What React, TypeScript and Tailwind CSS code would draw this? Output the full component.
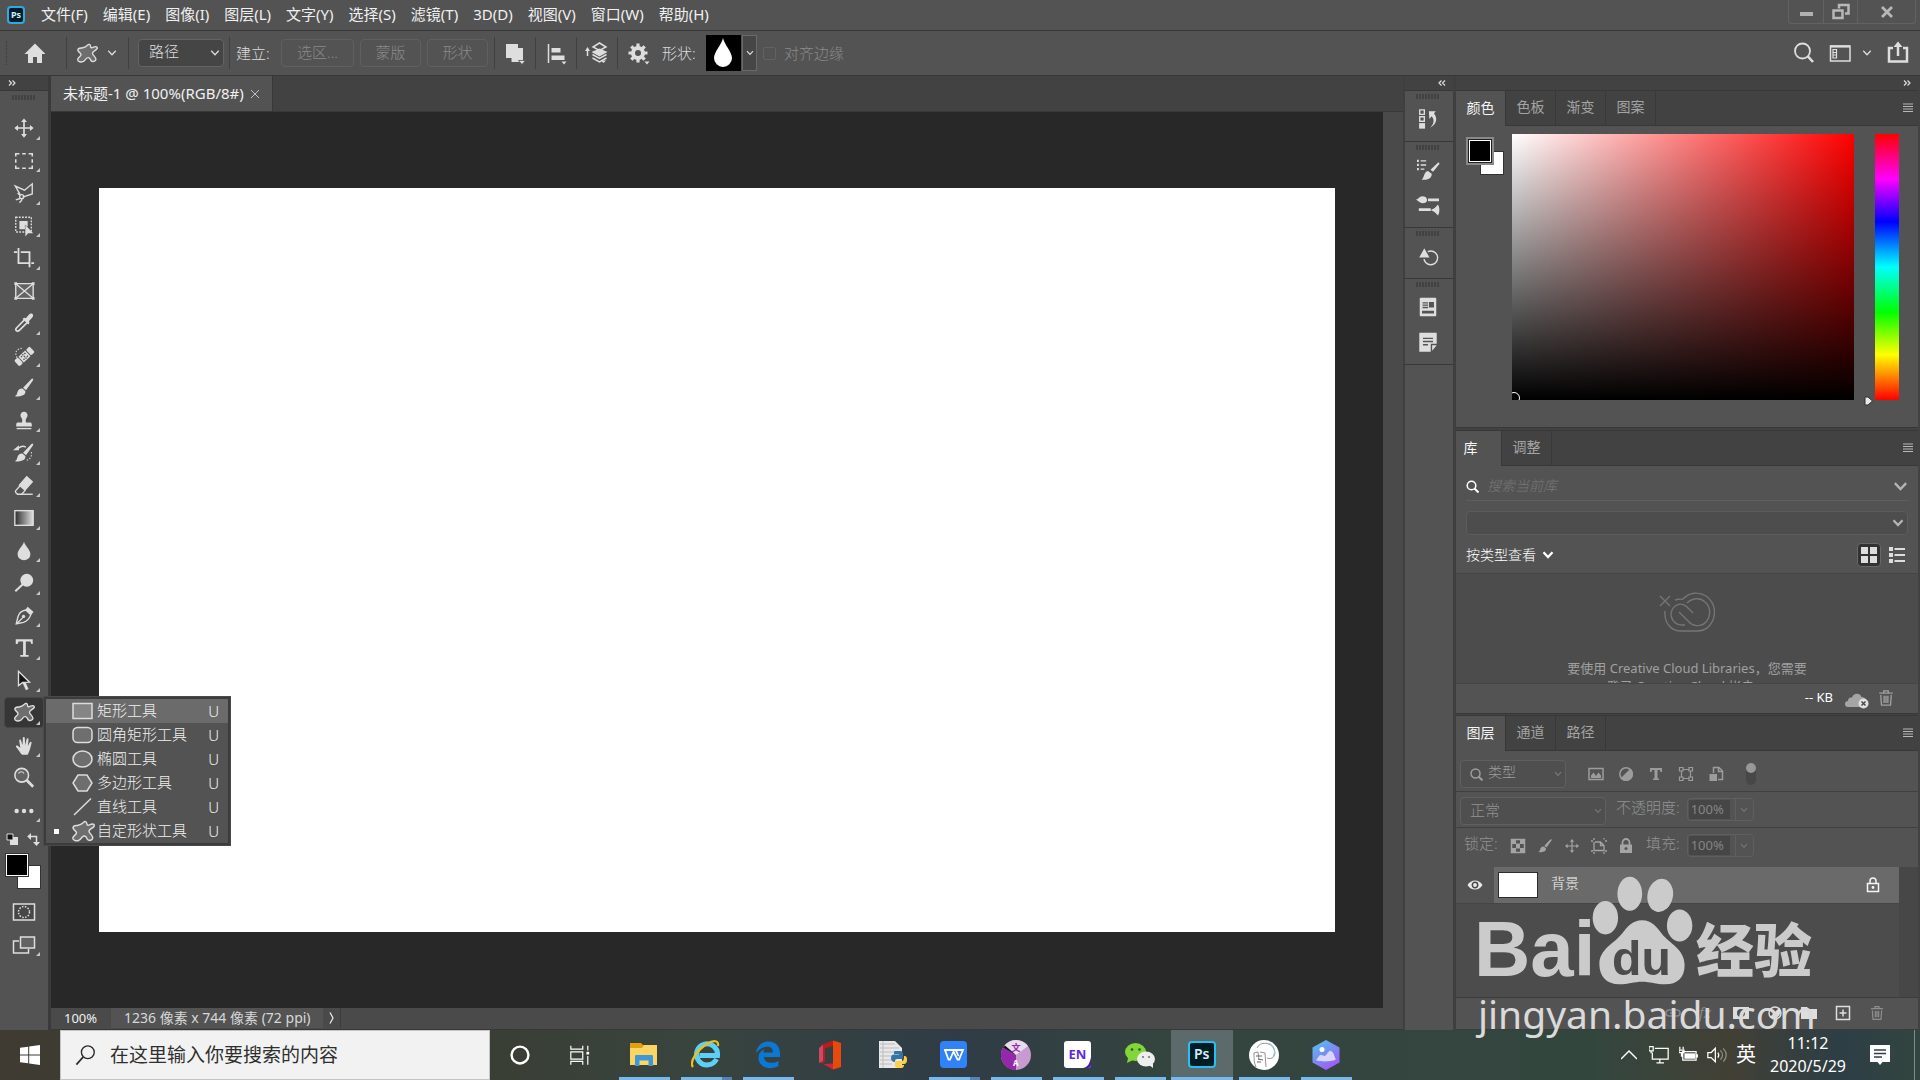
import type { ReactNode } from "react";
import clsx from "clsx";

type IconProps = {
  size?: number;
  box?: string;
  className?: string;
  children: ReactNode;
};

const Icon = ({ size = 24, box = "0 0 24 24", className, children }: IconProps) => (
  <svg
    width={size}
    height={size}
    viewBox={box}
    fill="none"
    stroke="currentColor"
    strokeWidth="1.5"
    className={clsx("shrink-0", className)}
    aria-hidden="true"
  >
    {children}
  </svg>
);

const Chevron = ({ className, size = 8, weight = 1.2 }: { className?: string; size?: number; weight?: number }) => (
  <svg
    width={size}
    height={size}
    viewBox="0 0 8 8"
    fill="none"
    stroke="currentColor"
    strokeWidth={weight}
    className={clsx("shrink-0", className)}
    aria-hidden="true"
  >
    <path d="M1 2.2 4 5.4 7 2.2" />
  </svg>
);

const Corner = () => (
  <svg width="4" height="4" viewBox="0 0 4 4" className="absolute bottom-[5px] right-[8px]" aria-hidden="true">
    <path d="M4 0v4H0z" fill="#c8c8c8" />
  </svg>
);

const DropMark = () => <path d="M16 19.500h5l-2.500 2.500z" fill="currentColor" stroke="none" />;

const Grip = () => (
  <div className="h-[5px] w-6 bg-[repeating-linear-gradient(to_right,#424242_0,#424242_2px,#535353_2px,#535353_3px)]" />
);

const Blob = () => (
  <path
    d="M12.500 3.500C14 1.800 15.600 2.600 15.800 4.500c.2 2.300 1.400 2.100 3.200 1.200C21.800 4.300 24 5.500 23 7.300c-1 1.900-4.500 2.700-5 4.700-.3 2 3.400 4 3.700 6.500.2 2.300-2.700 3.500-4.600 2.400-1.600-1-1.100-3.300-3.600-3.800-2.500-.4-3 2.800-5.500 4.100C5.500 22.400 2 21.600 1.800 19.300c-.1-2.400 3.700-3.300 3.700-5.500C5.500 11.500 1.800 11 2 8.700 2.300 6.200 5 6.700 6.500 6.500c2.500-.4 3.700-.8 6-3z"
    fill="#6e6e6e"
  />
);

const Brush = () => (
  <g fill="currentColor" stroke="none">
    <path d="M21.500 1.800c.9.500.5 1.400 0 2.200l-7.300 10.400-3.200-2.700 8.900-9.300c.5-.5 1.100-.9 1.600-.6z" />
    <path d="M10.200 12.600l3.200 2.800c.8 3.500-3 6.800-11.400 5.500 2.500-1 2.200-2.700 3-4.800.9-2.400 3-3.700 5.200-3.500z" />
  </g>
);

const MoveArrows = () => (
  <g>
    <path d="M12 4v16M4 12h16" strokeWidth="1.800" />
    <path d="M12 1.500l3.200 4H8.800zM12 22.500l3.200-4H8.800zM1.500 12l4-3.200v6.400zM22.500 12l-4-3.200v6.400z" fill="currentColor" stroke="none" />
  </g>
);

const Trash = () => (
  <g>
    <path d="M3 5.500h18M9 5V2.500h6V5M5 8l1 13.500h12L19 8M9.500 9v9.500M12 9v9.500M14.500 9v9.500" strokeWidth="1.800" />
  </g>
);

const tools: { name: string; corner?: boolean; icon: ReactNode }[] = [
  { name: "移动工具", corner: true, icon: <MoveArrows /> },
  { name: "矩形选框工具", corner: true, icon: <path d="M3 7V4h4m3 0h4m3 0h4v3m0 3v4m0 3v3h-4m-3 0h-4m-3 0H3v-3m0-3v-4" strokeWidth="1.700" /> },
  {
    name: "多边形套索工具",
    corner: true,
    icon: (
      <g>
        <path d="M8 14 2.500 4.500 12.500 9 21 2v11l-10.500 3.500" />
        <circle cx="9.500" cy="16" r="2.200" />
        <path d="M8 18l-5 1.500M10 18c0 2-1 3-3 4.500M7.500 14.500 5 12" />
      </g>
    ),
  },
  {
    name: "对象选择工具",
    corner: true,
    icon: (
      <g>
        <path d="M3 2.500h17v16H3z" strokeDasharray="2 1.400" />
        <path d="M7 6.500h9v6l-3-2v5H7z" fill="currentColor" stroke="none" />
        <path d="M13.500 11v12.500l3-3.500h5.500z" fill="currentColor" stroke="none" />
      </g>
    ),
  },
  {
    name: "裁剪工具",
    corner: true,
    icon: (
      <g strokeWidth="2">
        <path d="M1 5.500h3.500M6 1v16.500h13M8.500 5.500h9.500V22M20 17.500h3" />
      </g>
    ),
  },
  {
    name: "图框工具",
    icon: (
      <g>
        <path d="M3 4h19v16H3z" fill="#636363" />
        <path d="M3 4l19 16M22 4 3 20" />
        <path d="M1.500 2.500h3v3h-3zM20.500 2.500h3v3h-3zM1.500 18.500h3v3h-3zM20.500 18.500h3v3h-3z" fill="currentColor" stroke="none" />
      </g>
    ),
  },
  {
    name: "吸管工具",
    corner: true,
    icon: (
      <g>
        <path d="M13 8 4 17.200c-1 1-1 2.500-.4 3.200s2.300.7 3.300-.3L16 11" strokeWidth="1.800" />
        <path d="M10.500 7.500c1-1.600 2.500-1.600 3.500-.8l3.500-4c1.400-1.700 3.800-1.200 4.300.3.400 1.200 0 2.400-1 3.300L17.300 10c1 1 .6 2.600-.6 3.500z" fill="currentColor" stroke="none" />
      </g>
    ),
  },
  {
    name: "污点修复画笔工具",
    corner: true,
    icon: (
      <g>
        <path d="M4.500 14C1.500 9 3 3.500 11 3.500" strokeDasharray="1.500 1.800" strokeWidth="1.200" />
        <g transform="rotate(-43 13 13)">
          <rect x="1.500" y="8" width="5.500" height="8.500" rx="1.500" fill="currentColor" stroke="none" />
          <rect x="8" y="8" width="10" height="8.500" fill="currentColor" stroke="none" />
          <rect x="19" y="8" width="5.500" height="8.500" rx="1.500" fill="currentColor" stroke="none" />
          <path d="M10.500 9.500v1.500m0 2.500v1.500M13 9v1.500m0 1v1.500m0 1v1.500M15.500 9.500v1.500m0 2.500v1.500" stroke="#535353" />
        </g>
      </g>
    ),
  },
  { name: "画笔工具", corner: true, icon: <Brush /> },
  {
    name: "仿制图章工具",
    corner: true,
    icon: (
      <g fill="currentColor" stroke="none">
        <path d="M12 2a4 4 0 0 1 2.600 7c-1 1-.8 3.500-.4 4.500H19c1 0 1.500 1 1.500 2.500V18H3.500v-2c0-1.500.6-2.500 1.500-2.500h4.800c.4-1 .6-3.500-.4-4.500A4 4 0 0 1 12 2z" />
        <path d="M4 19.500h16V21H4z" />
      </g>
    ),
  },
  {
    name: "历史记录画笔工具",
    corner: true,
    icon: (
      <g>
        <Brush />
        <path d="M6.500 6.500C9 4 12 4.500 14 5.500" />
        <path d="M6.500 3.500v5.500H0z" fill="currentColor" stroke="none" />
        <path d="M20 11c.8 4-1 8-5 9" strokeDasharray="1.500 1.800" strokeWidth="1.200" />
      </g>
    ),
  },
  {
    name: "橡皮擦工具",
    corner: true,
    icon: (
      <g>
        <path d="M8 11.500 3 17c-.6.700-.4 1.500 0 2l2 2h4.500l4-4.500" />
        <path d="M15 2l6 5.500-8 9-6-5.500z" fill="currentColor" />
        <path d="M9 21h12.500" />
      </g>
    ),
  },
  {
    name: "渐变工具",
    corner: true,
    icon: (
      <g>
        <defs>
          <linearGradient id="toolGradient">
            <stop stopColor="#2c2c2c" />
            <stop offset="1" stopColor="#e0e0e0" />
          </linearGradient>
        </defs>
        <rect x="2" y="4" width="20" height="16" fill="url(#toolGradient)" />
      </g>
    ),
  },
  {
    name: "模糊工具",
    corner: true,
    icon: <path d="M12 2c1 4 7 9 7 13.500a7 6.500 0 0 1-14 0C5 11 11 6 12 2z" fill="currentColor" stroke="none" />,
  },
  {
    name: "减淡工具",
    corner: true,
    icon: (
      <g>
        <circle cx="15" cy="9" r="7" fill="currentColor" stroke="none" />
        <path d="M11 13l-8.500 8" strokeWidth="2.200" />
      </g>
    ),
  },
  {
    name: "钢笔工具",
    corner: true,
    icon: (
      <g>
        <path d="M14 5.500c-4 1-7 2-8.500 7L3.500 20.500l8-1.500c4-1.500 6.500-4.500 8-8.500z" />
        <circle cx="11.500" cy="12.500" r="1.800" fill="currentColor" stroke="none" />
        <path d="M11 13.500 4.500 20" />
        <path d="M16 2l6.500 5.500-3 3.500-6-5.500z" fill="currentColor" stroke="none" />
      </g>
    ),
  },
  {
    name: "横排文字工具",
    corner: true,
    icon: <path d="M3 2.500h18.500v5H20L19 5h-5v14.500h3v2H8v-2h3V5H6L5 7.500H3z" fill="currentColor" stroke="none" />,
  },
  {
    name: "路径选择工具",
    corner: true,
    icon: (
      <g>
        <path d="M11.500 12.500l4 9" strokeWidth="3.200" />
        <path d="M6 1.500v15.500l4.500-3.500 7.500-.2z" fill="#141414" />
      </g>
    ),
  },
  { name: "自定形状工具", corner: true, icon: <Blob /> },
  {
    name: "抓手工具",
    corner: true,
    icon: (
      <path
        d="M10 21.500c-2-1.500-3.500-4.500-5.500-7-.8-1.200-2-2.200-1-2.900 1.600-1 3.300 1.400 4.500 2.400L6.800 6.500C6.500 4.600 8.300 4.300 8.800 6l1.600 5.300.3-7.600c0-1.900 2-1.900 2.200 0l.4 7.500 1.500-6.500c.4-1.700 2.300-1.400 2.100.4L16.200 12l2-3.800c.8-1.500 2.500-.8 2 .8-1 3.500-1.700 8.500-4.200 12.500z"
        fill="currentColor"
        stroke="none"
      />
    ),
  },
  {
    name: "缩放工具",
    icon: (
      <g>
        <circle cx="9.500" cy="9" r="7.500" fill="#636363" strokeWidth="1.700" />
        <path d="M14.500 14l7.500 7.500" strokeWidth="3" />
        <path d="M6 7c1.500-2.500 4.500-2.500 6 0" strokeWidth="1.200" />
      </g>
    ),
  },
  {
    name: "编辑工具栏",
    corner: true,
    icon: (
      <g fill="currentColor" stroke="none">
        <circle cx="4" cy="12" r="2.400" />
        <circle cx="12" cy="12" r="2.400" />
        <circle cx="20" cy="12" r="2.400" />
      </g>
    ),
  },
];

const shapes: { name: string; icon: ReactNode; current?: boolean }[] = [
  { name: "矩形工具", icon: <path d="M2 4.500h19v15H2z" fill="#858585" /> },
  { name: "圆角矩形工具", icon: <rect x="2" y="4.500" width="19" height="15" rx="4.500" fill="#6e6e6e" /> },
  { name: "椭圆工具", icon: <ellipse cx="11.500" cy="12" rx="9.500" ry="8" fill="#6e6e6e" /> },
  { name: "多边形工具", icon: <path d="M7 4h9l5 8-5 8H7l-5-8z" fill="#6e6e6e" /> },
  { name: "直线工具", icon: <path d="M3 20 20 3.500" /> },
  { name: "自定形状工具", icon: <Blob />, current: true },
];

const ShapeMenu = () => (
  <div
    role="menu"
    className="absolute left-11 top-0 z-20 w-[186px] border-2 border-[#3c3c3c] bg-[#535353] font-light text-[#f0f0f0] outline outline-1 outline-[#4a4a4a]"
  >
    {shapes.map((shape, i) => (
      <button
        role="menuitem"
        key={shape.name}
        className={clsx("flex h-6 w-full items-center text-[15px] leading-[22px]", i === 0 && "bg-[#6b6b6b]")}
      >
        <span className="flex w-[25px] justify-center">
          {shape.current && <span className="mr-1 size-[5px] bg-white" />}
        </span>
        <Icon className="text-[#dcdcdc]">{shape.icon}</Icon>
        <span className="ml-0.5 flex-1 pb-0.5 text-left">{shape.name}</span>
        <span className="mr-[9px]">U</span>
      </button>
    ))}
  </div>
);

const Toolbar = () => (
  <aside className="relative flex w-[51px] shrink-0 flex-col border-r-[3px] border-[#3a3a3a] text-[#dedede]">
    <div className="flex h-[15px] items-center border-b border-[#383838] bg-[#424242] pl-2">
      <Icon size={8} box="0 0 8 8">
        <path d="M1 1.500 3.500 4 1 6.500M4.500 1.500 7 4 4.500 6.500" strokeWidth="1.200" />
      </Icon>
    </div>
    <div className="flex h-[21px] items-start justify-center pt-1">
      <Grip />
    </div>
    <div className="flex h-[715px] shrink-0 flex-col">
      {tools.map((tool, i) => (
        <div key={tool.name} className="relative flex flex-1">
          <button
            aria-label={tool.name}
            className={clsx(
              "flex flex-1 items-center justify-center",
              i === 18 && "mx-1 mb-0.5 rounded-sm border border-[#474747] bg-[#363636]",
            )}
          >
            <Icon size={22}>{tool.icon}</Icon>
          </button>
          {tool.corner && <Corner />}
          {i === 18 && <ShapeMenu />}
        </div>
      ))}
    </div>
    <div className="mt-1.5 flex h-4 justify-between pl-1.5 pr-2">
      <Icon size={12} box="0 0 12 12">
        <path d="M4 4h8v8H4z" fill="currentColor" stroke="none" />
        <path d="M1 1h6v6H1z" fill="#111" strokeWidth="1" />
      </Icon>
      <Icon size={13} box="0 0 13 13">
        <path d="M3 3.500h6.500V10" />
        <path d="M4 0v7L.2 3.500zM6 9h7l-3.500 4z" fill="currentColor" stroke="none" />
      </Icon>
    </div>
    <div className="relative mt-1 h-[38px]">
      <button aria-label="背景色" className="absolute left-[17px] top-3 size-6 border border-[#333] bg-white" />
      <button
        aria-label="前景色"
        className="absolute left-[5px] top-0 size-6 border border-[#333] bg-black outline outline-1 -outline-offset-2 outline-white"
      />
    </div>
    <button aria-label="快速蒙版" className="mt-1 flex h-[33px] items-center justify-center">
      <Icon>
        <path d="M1.500 4h21v16h-21z" fill="#474747" />
        <circle cx="12" cy="12" r="5.500" strokeDasharray="1.500 1.400" />
      </Icon>
    </button>
    <button aria-label="屏幕模式" className="relative flex h-[33px] items-center justify-center">
      <Icon>
        <path d="M7 8H1.500v12h15v-4" />
        <path d="M8.500 4h14v11h-14z" fill="#636363" />
      </Icon>
      <Corner />
    </button>
  </aside>
);

const menus = [
  "文件(F)",
  "编辑(E)",
  "图像(I)",
  "图层(L)",
  "文字(Y)",
  "选择(S)",
  "滤镜(T)",
  "3D(D)",
  "视图(V)",
  "窗口(W)",
  "帮助(H)",
];

const MenuBar = () => (
  <header className="flex h-[31px] shrink-0 items-center border-b border-[#383838]">
    <div className="ml-[7px] flex size-[18px] items-center justify-center rounded border-2 border-[#2fa9de] bg-[#001d2b] text-[9px] font-bold text-[#d5efff]">
      Ps
    </div>
    <nav className="ml-4 flex flex-1 gap-[15px] pb-0.5 text-[15px] leading-5 text-[#f0f0f0]">
      {menus.map((m) => (
        <button key={m}>{m}</button>
      ))}
    </nav>
    <div className="mr-1 flex h-6 self-start rounded-b border border-t-0 border-[#626262] text-[#b8b8b8]">
      <button aria-label="最小化" className="flex w-[35px] items-center justify-center border-r border-[#626262]">
        <span className="mt-1 h-1 w-[13px] bg-[#b0b0b0]" />
      </button>
      <button aria-label="还原" className="flex w-[34px] items-center justify-center border-r border-[#626262]">
        <Icon size={18} box="0 0 18 18">
          <path d="M7 5.500V2h9.500v8.500H13M1.500 7.500h9v7.500h-9z" strokeWidth="2.500" />
        </Icon>
      </button>
      <button aria-label="关闭" className="flex w-[57px] items-center justify-center">
        <Icon size={14} box="0 0 14 14">
          <path d="M2 2l10 10M12 2 2 12" strokeWidth="2.800" />
        </Icon>
      </button>
    </div>
  </header>
);

const Rule = ({ className }: { className?: string }) => <div className={clsx("h-8 w-px shrink-0 bg-[#404040]", className)} />;

const OptionsBar = () => (
  <section className="flex h-[45px] shrink-0 items-center border-b border-[#383838] text-[15px] font-light text-[#dedede]">
    <div className="ml-1.5 h-6 w-px border-l border-dotted border-[#3a3a3a]" />
    <button aria-label="主页" className="ml-4">
      <Icon>
        <path d="M12 2.500 1.500 13H5v9h5v-6h4v6h5v-9h3.500z" fill="currentColor" stroke="none" />
      </Icon>
    </button>
    <Rule className="ml-[19px]" />
    <button aria-label="自定形状工具" className="ml-[9px] flex items-center gap-[9px]">
      <Icon size={22}>
        <Blob />
      </Icon>
      <Chevron size={10} weight={1} />
    </button>
    <Rule className="ml-[11px]" />
    <label className="relative ml-[9px] flex items-center">
      <select
        aria-label="工具模式"
        className="h-7 w-[86px] appearance-none rounded-sm border border-[#636363] bg-[#454545] pb-1 pl-2.5 text-[15px] leading-5"
      >
        <option>路径</option>
      </select>
      <Chevron size={10} weight={1} className="pointer-events-none absolute right-1" />
    </label>
    <Rule className="ml-[5px]" />
    <span className="ml-1.5 w-[45px]">建立:</span>
    <button className="h-7 w-[73px] rounded-sm border border-[#606060] pb-0.5 text-[#8a8a8a]">选区...</button>
    <button className="ml-1.5 h-7 w-[61px] rounded-sm border border-[#606060] pb-0.5 text-[#8a8a8a]">蒙版</button>
    <button className="ml-1.5 h-7 w-[61px] rounded-sm border border-[#606060] pb-0.5 text-[#8a8a8a]">形状</button>
    <Rule className="ml-1.5" />
    <button aria-label="路径操作" className="mx-2">
      <Icon>
        <path d="M3 3h12v4h5v14H8.500v-4H3z" fill="currentColor" stroke="none" />
        <path d="M15.500 19.500h7L19 23.500z" fill="#dedede" stroke="#535353" strokeWidth=".8" />
      </Icon>
    </button>
    <Rule />
    <button aria-label="路径对齐方式" className="mx-2">
      <Icon>
        <path d="M4.500 3v19" strokeWidth="1.500" />
        <path d="M7.500 7h9v4.500h-9zM7.500 14.500h13V19h-13z" fill="currentColor" stroke="none" />
        <path d="M17.500 20.500h5L20 23.500z" fill="currentColor" stroke="none" />
      </Icon>
    </button>
    <Rule />
    <button aria-label="路径排列方式" className="mx-2">
      <Icon>
        <path d="M2.500 15V9" />
        <path d="M2.500 6 5 10H0zM14.500 7.500l8 3.500-8 4.500-8-4.500z" fill="currentColor" stroke="none" />
        <path d="M14.500 2 8 6l6.500 3.500L21 6zM7.500 13.500l7 4 7-4M7.500 17l7 4 7-4" />
        <DropMark />
      </Icon>
    </button>
    <Rule />
    <button aria-label="其他选项" className="ml-2">
      <Icon>
        <circle cx="12" cy="12" r="5" strokeWidth="4" />
        <path d="M12 2.500V6M12 18v3.500M2.500 12H6M18 12h3.500M5.300 5.300l2.200 2.200M16.500 16.500l2.200 2.200M5.300 18.700l2.200-2.200M16.500 7.500l2.200-2.200" strokeWidth="3.200" />
        <path d="M18.500 20.500h5L21 23.500z" fill="currentColor" stroke="none" />
      </Icon>
    </button>
    <span className="ml-3 w-11">形状:</span>
    <button aria-label="形状" className="flex h-9 w-[35px] items-center justify-center bg-black pr-0.5 text-white">
      <svg width="20" height="30" viewBox="0 0 20 30" fill="currentColor" aria-hidden="true">
        <path d="M10 0c1 6 9 14 9 20a9 9 0 0 1-18 0C1 14 9 6 10 0z" />
      </svg>
    </button>
    <button aria-label="形状列表" className="ml-px flex h-9 w-[15px] items-center justify-center border border-[#6a6a6a] bg-[#464646]">
      <Chevron />
    </button>
    <label className="ml-1.5 flex items-center gap-2 text-[#8a8a8a]">
      <input type="checkbox" className="size-[13px] appearance-none rounded-[2px] border border-[#626262]" />
      对齐边缘
    </label>
    <div className="ml-auto mr-2.5 flex items-center">
      <button aria-label="搜索" className="mr-3">
        <Icon>
          <circle cx="10.500" cy="10" r="7.500" strokeWidth="1.800" />
          <path d="M16 15.500l5 5.500" strokeWidth="2.600" />
        </Icon>
      </button>
      <button aria-label="工作区" className="flex items-center gap-2.5">
        <Icon>
          <path d="M2.500 5h19.500v15H2.500z" />
          <path d="M2 5.500h20" strokeWidth="2.200" />
          <path d="M5 8.500h3.500v8.500H5zM5 11.500h3M5 14h3" strokeWidth="1.200" />
        </Icon>
        <Chevron size={10} weight={1} />
      </button>
      <button aria-label="共享" className="ml-3.5">
        <Icon>
          <path d="M7 7H3v13.500h18V7h-4" strokeWidth="2.500" />
          <path d="M12 15V5" strokeWidth="2.500" />
          <path d="M12 .5l4.500 5.500h-9z" fill="currentColor" stroke="none" />
        </Icon>
      </button>
    </div>
  </section>
);

const Document = () => (
  <main className="flex min-w-0 flex-1 flex-col">
    <div className="flex h-9 border-b border-[#383838] bg-[#424242]">
      <div className="flex w-[222px] items-center border-r border-[#383838] bg-[#535353] pl-3 text-[15px] text-[#f0f0f0]">
        <span>未标题-1 @ 100%(RGB/8#)</span>
        <button aria-label="关闭文档" className="ml-1.5 text-[#c0c0c0]">
          <Icon size={10} box="0 0 10 10">
            <path d="M1 1l8 8M9 1 1 9" strokeWidth="1" />
          </Icon>
        </button>
      </div>
    </div>
    <div className="flex min-h-0 flex-1">
      <div className="flex flex-1 bg-[#282828] px-12 py-[76px]">
        <div className="flex-1 bg-white" />
      </div>
      <div className="w-5 bg-[#4a4a4a]" />
    </div>
    <footer className="flex h-[22px] items-center border-b border-[#383838] bg-[#4a4a4a] pb-px text-sm text-[#f0f0f0]">
      <span className="w-[60px] pl-[13px] text-[13px]">100%</span>
      <span className="flex h-full w-[212px] items-center bg-[#535353] pl-[13px] text-[#d8d8d8]">
        1236 像素 x 744 像素 (72 ppi)
      </span>
      <button aria-label="状态栏选项" className="flex h-full w-[18px] items-center justify-center border-r border-[#3c3c3c]">
        <Icon size={12} box="0 0 12 12">
          <path d="M4 .5 7 6l-3 5.500" strokeWidth="1.200" />
        </Icon>
      </button>
    </footer>
  </main>
);

const dockGroups: { name: string; icon: ReactNode }[][] = [
  [
    {
      name: "历史记录",
      icon: (
        <g>
          <path d="M3 2h5v5H3zM3 9.500h5v5H3z" />
          <path d="M2.300 16.500h6.500v6H2.300z" fill="currentColor" stroke="none" />
          <path d="M13 3.500h7.500L18.500 6c4 5 3.500 11-4 15.500 4.500-5 4.500-9 1.500-12.500L13.500 12z" fill="currentColor" stroke="none" />
        </g>
      ),
    },
  ],
  [
    {
      name: "画笔设置",
      icon: (
        <g>
          <path d="M0 2h2M0 6.500h2M0 11h2" strokeWidth="2.400" />
          <path d="M4 2h6M4 6.500h6M4 11h4" />
          <path d="M24 4c.8.500.4 1.400 0 2l-6.500 8-2.800-2.400 7.500-7.100c.6-.6 1.300-.8 1.800-.5zM12 13l4 3c.5 4-3 7.500-11 6.500 3-2 2.500-9 7-9.500z" fill="currentColor" stroke="none" />
        </g>
      ),
    },
    {
      name: "画笔",
      icon: (
        <g>
          <path d="M-1 6c2.500 0 3.500-3.500 7-3.500 3 0 5 1.500 5 4S9 10 6 10C3 10 1.500 7.500-1 6zM15 17.500l4-2 4-4c2 4 2 8 0 12l-4-4z" fill="currentColor" stroke="none" />
          <path d="M12 6.500h12M2 17h13" strokeWidth="3" />
        </g>
      ),
    },
  ],
  [
    {
      name: "形状",
      icon: (
        <g>
          <circle cx="15" cy="14" r="7.500" />
          <path d="M8 2l7 12.500H1z" fill="currentColor" stroke="#535353" />
        </g>
      ),
    },
  ],
  [
    {
      name: "学习",
      icon: (
        <g>
          <path d="M4 2h16c.6 0 1 .4 1 1v18c0 .6-.4 1-1 1H4c-.6 0-1-.4-1-1V3c0-.6.400-1 1-1z" fill="currentColor" stroke="none" />
          <path d="M6 7.500h6M6 10h6M6 12.500h6" stroke="#535353" />
          <path d="M13 6.500h5.500v6H13zM5.500 16h13v3h-13z" fill="#535353" stroke="none" />
        </g>
      ),
    },
    {
      name: "注释",
      icon: (
        <g>
          <path d="M2.500 2h19v12h-6.500v8.500H2.500z" fill="currentColor" stroke="none" />
          <path d="M6.500 8h11M6.500 11.500h11M6.500 15h5.500" stroke="#535353" />
          <path d="M16.500 15.500h5L16.500 21.500z" fill="currentColor" stroke="none" />
        </g>
      ),
    },
  ],
];

const Dock = () => (
  <aside className="w-[53px] shrink-0 border-l-2 border-r-[3px] border-[#3f3f3f] bg-[#535353] text-[#dedede]">
    <div className="flex h-[15px] items-center justify-end border-b border-[#383838] bg-[#424242] pr-[7px]">
      <Icon size={8} box="0 0 8 8">
        <path d="M3.500 1.500 1 4l2.500 2.500M7 1.500 4.500 4 7 6.500" strokeWidth="1.200" />
      </Icon>
    </div>
    {dockGroups.map((group, i) => (
      <div key={i} className="flex flex-col items-center border-b border-[#383838] pb-[5px] pr-0.5">
        <div className="flex h-2.5 items-end pb-0.5">
          <Grip />
        </div>
        {group.map((item) => (
          <button key={item.name} aria-label={item.name} className="flex h-[35px] items-center">
            <Icon size={22} className="overflow-visible">
              {item.icon}
            </Icon>
          </button>
        ))}
      </div>
    ))}
  </aside>
);

const PanelTabs = ({ tabs }: { tabs: string[] }) => (
  <div className="flex h-[35px] shrink-0 border-b border-[#383838] bg-[#424242] text-sm">
    {tabs.map((t, i) => (
      <button
        key={t}
        className={clsx(
          "border-r border-[#383838] pb-0.5",
          i === 0 ? "-mb-px bg-[#535353] text-[#f5f5f5]" : "text-[#a4a4a4]",
          t.length === 1 ? "w-[46px] pr-4" : "w-[50px]",
        )}
      >
        {t}
      </button>
    ))}
    <button aria-label="面板菜单" className="ml-auto mr-[5px] text-[#b8b8b8]">
      <Icon size={10} box="0 0 10 10">
        <path d="M0 1h10M0 3.500h10M0 6h10M0 8.500h10" strokeWidth="1.200" />
      </Icon>
    </button>
  </div>
);

const ColorPanel = () => (
  <section className="flex h-[336px] shrink-0 flex-col">
    <PanelTabs tabs={["颜色", "色板", "渐变", "图案"]} />
    <div className="flex pt-2">
      <div className="relative ml-2.5 h-10 w-[46px] shrink-0">
        <button aria-label="背景色" className="absolute left-3.5 top-[17px] size-6 border border-[#333] bg-white" />
        <button aria-label="前景色" className="absolute left-0 top-[3px] size-7 border-2 border-[#8a8a8a] bg-[#222] p-px">
          <span className="block size-full border border-white bg-black" />
        </button>
      </div>
      <div className="relative h-[266px] flex-1 overflow-hidden bg-[linear-gradient(to_top,#000,transparent),linear-gradient(to_right,#fff,#f00)]">
        <span className="absolute -bottom-1 -left-1 size-3 rounded-full border border-white" />
      </div>
      <div className="relative ml-[21px] mr-[19px] w-6 bg-[linear-gradient(to_bottom,#f00,#f0f_17%,#00f_33%,#0ff_50%,#0f0_67%,#ff0_83%,#f00)]">
        <svg width="9" height="10" viewBox="0 0 9 10" className="absolute -bottom-1.5 -left-[11px]" aria-hidden="true">
          <path d="M1 1h3l4.500 4L4 9H1z" fill="#e8e8e8" stroke="#333" />
        </svg>
      </div>
    </div>
  </section>
);

const LibraryPanel = () => (
  <section className="flex h-[282px] shrink-0 flex-col">
    <PanelTabs tabs={["库", "调整"]} />
    <div className="mx-2.5 flex h-[35px] items-center border-b border-[#5f5f5f] pt-1.5">
      <Icon size={13} box="0 0 13 13" className="text-white">
        <circle cx="5.500" cy="5.500" r="4.300" />
        <path d="M8.500 8.500l4 4" strokeWidth="2" />
      </Icon>
      <input
        aria-label="搜索当前库"
        placeholder="搜索当前库"
        className="ml-2 flex-1 text-sm font-light italic outline-none placeholder:text-[#777]"
      />
      <Chevron size={15} className="text-[#b5b5b5]" />
    </div>
    <label className="relative mx-2.5 mt-2.5 flex items-center">
      <select aria-label="库列表" className="h-6 w-full appearance-none rounded border border-[#5c5c5c] bg-[#4d4d4d]" />
      <Chevron size={12} weight={1.5} className="pointer-events-none absolute right-1 text-[#b5b5b5]" />
    </label>
    <div className="flex h-[38px] items-center px-2.5 pt-0.5 text-white">
      <button className="flex items-center gap-1.5 text-sm font-light">
        按类型查看
        <Chevron size={12} weight={1.5} />
      </button>
      <button aria-label="网格视图" className="ml-auto flex size-6 items-center justify-center rounded border border-[#686868] bg-[#323232] text-[#dedede]">
        <Icon size={16} box="0 0 16 16">
          <path d="M0 0h7v7H0zM9 0h7v7H9zM0 9h7v7H0zM9 9h7v7H9z" fill="currentColor" stroke="none" />
        </Icon>
      </button>
      <button aria-label="列表视图" className="ml-2 mr-[3px] text-[#dedede]">
        <Icon size={16} box="0 0 16 16">
          <path d="M0 2h4M0 8h4M0 14h4" strokeWidth="4" />
          <path d="M5.500 2H16M5.500 8H16M5.500 14H16" strokeWidth="1.800" />
        </Icon>
      </button>
    </div>
    <div className="flex h-[111px] flex-col items-center overflow-hidden border-y border-[#454545] bg-[#4c4c4c]">
      <svg width="56" height="41" viewBox="0 0 56 41" fill="none" stroke="#757575" strokeWidth="1.400" className="mt-[18px] shrink-0" aria-hidden="true">
        <path d="M1 4l10 10M11 4 1 14" />
        <path d="M16 8c2-.8 5-1 8-1 6-7 16-7.500 23-3 10 7 11 20 4 29-3 4-8 6-13 6H22C12 39 5 31 6 19" />
        <path d="M28 11c5-5 13-6 18-1 6 5 6 14 1 20-5 5-13 5-18-1l-9-9" />
        <path d="M34 21l-6-6c-5-5-12-3-15 3-3 7 2 15 10 15h3" />
      </svg>
      <p className="mt-[26px] shrink-0 text-center text-[13px] leading-[18px] text-[#a0a0a0]">
        要使用 Creative Cloud Libraries，您需要
        <br />
        登录 Creative Cloud 帐户。
      </p>
    </div>
    <div className="flex h-7 items-center justify-end pr-[23px] text-[13px] text-white">
      <span>-- KB</span>
      <svg width="24" height="17" viewBox="0 0 24 17" className="ml-3 mt-1" aria-hidden="true">
        <path d="M3 15a3 3 0 0 1 0-6c0-3 2-4 4-3.500C8 1 15 0 16.500 5 21 5 22 9 20 15z" fill="#a5a5a5" />
        <circle cx="18.500" cy="11.500" r="5" fill="#e0e0e0" />
        <path d="M16.500 9.500l4 4M20.500 9.500l-4 4" stroke="#444" strokeWidth="1.400" />
      </svg>
      <button aria-label="删除" className="ml-2 text-[#a0a0a0]">
        <Icon size={18}>
          <Trash />
        </Icon>
      </button>
    </div>
  </section>
);

const filters: { name: string; icon: ReactNode }[] = [
  {
    name: "像素图层",
    icon: (
      <g>
        <path d="M1 2.500h14v11H1z" />
        <path d="M3 12V9.500l2.500-3L8 10l2.500-3.500 2.500 3V12z" fill="currentColor" stroke="none" />
      </g>
    ),
  },
  {
    name: "调整图层",
    icon: (
      <g>
        <circle cx="8" cy="8" r="6.200" />
        <path d="M12.500 3.500a6.300 6.300 0 0 1-9 9z" fill="currentColor" />
      </g>
    ),
  },
  { name: "文字图层", icon: <path d="M2 2h12v4h-1.500L12 4H9.500v8.500H11V14H5v-1.500h1.500V4H4l-.5 2H2z" fill="currentColor" stroke="none" /> },
  {
    name: "形状图层",
    icon: (
      <g strokeWidth="1.200">
        <path d="M3.500 3.500h9v9h-9z" />
        <path d="M1.500 1.500h3.500V5H1.500zM11 1.500h3.500V5H11zM1.500 11h3.500v3.500H1.500zM11 11h3.500v3.500H11z" fill="#535353" />
      </g>
    ),
  },
  {
    name: "智能对象",
    icon: (
      <g>
        <path d="M5.500 7V1.500H11L14.500 5v8.500H10M10.500 1.500V5.500h4" />
        <path d="M1.500 8h7.500v7H1.500z" fill="currentColor" stroke="none" />
      </g>
    ),
  },
];

const locks: { name: string; icon: ReactNode; box?: string }[] = [
  {
    name: "锁定透明像素",
    box: "0 0 16 16",
    icon: (
      <g>
        <path d="M1.500 1.500h13v13h-13z" />
        <path d="M1 1h5v5H1zM10 1h5v5h-5zM6 5.500h4v5H6zM1 10h5v5H1zM10 10h5v5h-5z" fill="currentColor" stroke="none" />
      </g>
    ),
  },
  { name: "锁定图像像素", icon: <Brush /> },
  { name: "锁定位置", icon: <MoveArrows /> },
  {
    name: "防止自动嵌套",
    box: "0 0 16 16",
    icon: <path d="M3 0v2M0 3h2M3 4v8.500h10V7.500L9.500 4H4M9.500 4v3.500H13M14 3h2M13 0v1.500M3 14v2M0 13h2M14 13h2M13 14v2" strokeWidth="1.300" />,
  },
  {
    name: "锁定全部",
    box: "0 0 16 16",
    icon: (
      <g>
        <path d="M4.500 7V4.500a3.500 3.500 0 0 1 7 0V7" strokeWidth="1.800" />
        <path d="M2 6.500h12V15H2z" fill="currentColor" stroke="none" />
        <circle cx="8" cy="10.500" r="1.500" fill="#535353" stroke="none" />
      </g>
    ),
  },
];

const Percent = ({ id, label }: { id: string; label: string }) => (
  <div className="flex items-center text-[#929292]">
    <label htmlFor={id} className="pb-1 text-[15px] font-light">
      {label}
    </label>
    <div className="ml-[7px] flex h-[23px] rounded-sm border border-[#5f5f5f]">
      <input id={id} defaultValue="100%" className="m-px w-[41px] bg-[#464646] pl-0.5 text-[13px] text-[#858585]" />
      <button aria-label={label} className="ml-1 w-[18px] border-l border-[#5f5f5f] pl-1">
        <Chevron className="text-[#747474]" />
      </button>
    </div>
  </div>
);

const LayersPanel = () => (
  <section className="flex min-h-0 flex-1 flex-col">
    <PanelTabs tabs={["图层", "通道", "路径"]} />
    <div className="flex h-[41px] shrink-0 items-center border-b border-[#404040] pl-1 pt-1.5 text-[#9c9c9c]">
      <div className="relative flex items-center">
        <Icon size={13} box="0 0 13 13" className="absolute left-2.5">
          <circle cx="5.500" cy="5.500" r="4.500" />
          <path d="M8.500 8.500l4 4" strokeWidth="2" />
        </Icon>
        <select
          aria-label="类型"
          className="h-7 w-[106px] appearance-none rounded-sm border border-[#606060] bg-[#4f4f4f] pb-1 pl-[27px] text-sm font-light"
        >
          <option>类型</option>
        </select>
        <Chevron className="pointer-events-none absolute right-1 text-[#7a7a7a]" />
      </div>
      <div className="ml-[22px] flex gap-3.5">
        {filters.map((f) => (
          <button key={f.name} aria-label={f.name}>
            <Icon size={16} box="0 0 16 16">
              {f.icon}
            </Icon>
          </button>
        ))}
      </div>
      <button aria-label="过滤开关" className="ml-[22px] flex h-[22px] w-2.5 items-start rounded-full bg-[#474747]">
        <span className="size-2.5 rounded-full bg-[#989898]" />
      </button>
    </div>
    <div className="flex h-9 shrink-0 items-center border-b border-[#404040] pl-1 pt-0.5 text-[#929292]">
      <div className="relative flex items-center">
        <select
          aria-label="混合模式"
          className="h-7 w-[146px] appearance-none rounded-sm border border-[#606060] bg-[#4f4f4f] pl-[9px] text-[15px] font-light"
        >
          <option>正常</option>
        </select>
        <Chevron className="pointer-events-none absolute right-1 text-[#747474]" />
      </div>
      <div className="ml-2.5 pb-0.5">
        <Percent id="opacity" label="不透明度:" />
      </div>
    </div>
    <div className="flex h-[39px] shrink-0 items-center pb-1 pl-2 text-[#929292]">
      <span className="w-[46px] pb-1 text-[15px] font-light">锁定:</span>
      <div className="flex gap-[11px] text-[#a4a4a4]">
        {locks.map((l) => (
          <button key={l.name} aria-label={l.name}>
            <Icon size={16} box={l.box}>
              {l.icon}
            </Icon>
          </button>
        ))}
      </div>
      <div className="ml-3">
        <Percent id="fill" label="填充:" />
      </div>
    </div>
    <div className="flex min-h-0 flex-1 bg-[#4c4c4c]">
      <div className="flex flex-1 flex-col">
        <div className="flex h-[37px] border-b border-[#454545] bg-[#535353]">
          <button aria-label="可见性" className="flex w-[38px] items-center justify-center text-[#e8e8e8]">
            <Icon size={16} box="0 0 16 16">
              <path d="M.5 8C4 2 12 2 15.500 8 12 14 4 14 .5 8z" fill="currentColor" stroke="none" />
              <circle cx="8" cy="8" r="2.700" stroke="#474747" strokeWidth="1.500" />
            </Icon>
          </button>
          <div className="flex flex-1 items-center bg-[#6a6a6a] pl-1 text-[#f5f5f5]">
            <span className="h-[26px] w-10 border border-[#2c2c2c] bg-white" />
            <span className="ml-[13px] flex-1 pb-1 text-sm font-light">背景</span>
            <Icon size={16} box="0 0 16 16" className="mr-[18px]">
              <path d="M2.500 6.500h11v8h-11zM5 6V4a3 3 0 0 1 6 0v2" />
              <circle cx="8" cy="10.500" r="1.400" fill="currentColor" stroke="none" />
            </Icon>
          </div>
        </div>
      </div>
      <div className="w-[19px] bg-[#474747]" />
    </div>
    <div className="flex h-[33px] shrink-0 items-center justify-end gap-[18px] border-y border-[#3c3c3c] pb-0.5 pr-[33px] text-[#dedede]">
      <Icon size={16} box="0 0 16 16" className="text-[#858585]">
        <path d="M7 5H4a3 3 0 0 0 0 6h3M9 5h3a3 3 0 0 1 0 6H9M5 8h6" />
      </Icon>
      <span className="w-4 text-[15px] italic text-[#858585]">fx</span>
      <Icon size={16} box="0 0 16 16">
        <path d="M0 2h16v12H0z" fill="currentColor" stroke="none" />
        <circle cx="8" cy="8" r="4" fill="#535353" stroke="none" />
      </Icon>
      <Icon size={16} box="0 0 16 16">
        <circle cx="8" cy="8" r="6" />
        <path d="M12 4a6 6 0 0 1-8 8z" fill="currentColor" />
      </Icon>
      <Icon size={16} box="0 0 16 16">
        <path d="M0 2h6l2 2h8v10H0z" fill="currentColor" stroke="none" />
      </Icon>
      <button aria-label="新建图层">
        <Icon size={16} box="0 0 16 16">
          <path d="M1.500 1.500h13v13h-13zM8 4.500v7M4.500 8h7" />
        </Icon>
      </button>
      <button aria-label="删除图层" className="text-[#8e8e8e]">
        <Icon size={16}>
          <Trash />
        </Icon>
      </button>
    </div>
  </section>
);

const Panels = () => (
  <aside className="flex w-[464px] shrink-0 flex-col border-r-2 border-[#424242]">
    <div className="flex h-[15px] shrink-0 items-center justify-end border-b border-[#383838] bg-[#424242] pr-[7px] text-[#dedede]">
      <Icon size={8} box="0 0 8 8">
        <path d="M1 1.500 3.500 4 1 6.500M4.500 1.500 7 4 4.500 6.500" strokeWidth="1.200" />
      </Icon>
    </div>
    <ColorPanel />
    <div className="h-1 shrink-0 border-y border-[#383838] bg-[#424242]" />
    <LibraryPanel />
    <div className="h-[3px] shrink-0 border-y border-[#383838] bg-[#424242]" />
    <LayersPanel />
  </aside>
);

const Watermark = () => (
  <div className="pointer-events-none absolute bottom-[39px] right-[98px] z-10 w-[348px] text-[#cbcbcb]">
    <div className="flex h-[112px] items-end">
      <span className="w-[118px] font-['Liberation_Sans'] text-[78px] font-bold leading-[76px]">Bai</span>
      <svg width="102" height="112" viewBox="380 30 305 335" fill="currentColor" className="shrink-0" aria-hidden="true">
        <ellipse cx="420" cy="158" rx="38" ry="50" />
        <ellipse cx="493" cy="86" rx="37" ry="51" />
        <ellipse cx="584" cy="91" rx="38" ry="50" transform="rotate(12 584 91)" />
        <ellipse cx="642" cy="181" rx="38" ry="48" />
        <path d="M530 165c30 0 45 22 60 42 22 28 67 45 67 92 0 38-22 58-58 58-28 0-45-8-69-8s-42 8-69 8c-37 0-59-24-59-60 0-46 45-62 68-92 15-20 30-40 60-40z" />
        <text x="440" y="328" fontSize="144" fontWeight="700" fill="#4c4c4c" className="font-['Liberation_Sans']">
          du
        </text>
      </svg>
      <span className="ml-0.5 text-[58px] font-black leading-[74px]">经验</span>
    </div>
    <div className="ml-1 text-[39px] leading-[54px] text-[#dadada]">jingyan.baidu.com</div>
  </div>
);

const apps: { name: string; open?: boolean; stacked?: boolean; active?: boolean; icon: ReactNode }[] = [
  {
    name: "文件资源管理器",
    open: true,
    icon: (
      <g stroke="none">
        <path d="M1 3h11l2 2h14v20H1z" fill="#e0a010" />
        <path d="M1 8h12l2-3h13v20H1z" fill="#fcd462" />
        <path d="M6 26V16.500c0-1 .6-1.500 1.500-1.500h15c.9 0 1.500.5 1.500 1.500V26h-4.500v-5.500h-9V26z" fill="#3f97da" />
      </g>
    ),
  },
  {
    name: "Internet Explorer",
    open: true,
    stacked: true,
    icon: (
      <g>
        <path d="M25.500 19A10.500 10.500 0 1 1 26.500 15.500H8.500" stroke="#5fd0f5" strokeWidth="5" />
        <path d="M2 27C-2 22 6 10 16 4c6-4 12-4 11 2" stroke="#f0bf1c" strokeWidth="2.200" />
      </g>
    ),
  },
  {
    name: "Edge",
    open: true,
    icon: (
      <path
        d="M3 13C4 6 9 1.500 15.500 1.500 23 1.500 27 7 27 13.500V17H11c0 6 8 7.500 14.500 4v5c-8 4.500-20 2-20-8.500 0-4 2.500-7 6-8.500-.8 1-1 2.500-1 3.500h9.500c0-8-10-7.500-17 .5z"
        fill="#0a78d4"
        stroke="none"
      />
    ),
  },
  {
    name: "Office",
    icon: (
      <g stroke="none">
        <path d="M18 .5 26 3v24l-8 2.500z" fill="#e64a0c" />
        <path d="M18 .5 6 5v19l4-2V8.500L18 6z" fill="#b81d1d" />
        <path d="M4 8l4-3v16l-4 2z" fill="#c94b63" />
        <path d="M8 24l10-.5v6z" fill="#d8203a" />
      </g>
    ),
  },
  {
    name: "Python",
    icon: (
      <g stroke="none">
        <path d="M2 1h16l7 7v20H2z" fill="#e8e8e8" />
        <path d="M3 4h15M3 8h19M3 12h20M3 16h14M3 20h12M3 24h12M6 1v27" stroke="#bdbdbd" strokeWidth="1" />
        <path d="M18 11h5c2 0 3 1 3 3v3c0 1.500-1 2-2 2h-4c-1.500 0-2 1-2 3-3 0-4-2-4-4s1-3.500 3-3.500h5V14h-5c0-2 0-3 1-3z" fill="#3673a5" />
        <path d="M27 16c3 0 3 2 3 4s-1 4-3 4h-4v1h4c0 3-2 3-4 3s-5 0-5-3v-2c0-1.500 1-2 2-2h5c1.500 0 2-2 2-5z" fill="#ffd140" />
      </g>
    ),
  },
  {
    name: "WPS",
    open: true,
    stacked: true,
    icon: (
      <g>
        <rect x="1" y="1" width="27" height="27" rx="4" fill="#2f82f7" stroke="none" />
        <path d="M5 10h19l-4 9.500h-1.500l-4-8-3.500 8H9.500L6 10M17 10.500l2.500 5.500" stroke="#fff" strokeWidth="1.800" />
      </g>
    ),
  },
  {
    name: "翻译",
    open: true,
    icon: (
      <g stroke="none">
        <circle cx="15" cy="15" r="15" fill="#c79bd0" />
        <path d="M15 15 2 7.500A15 15 0 0 0 15 30z" fill="#9328ab" />
        <path d="M15 15 3.500 5.500A15 15 0 0 1 27 6z" fill="#e9dcec" />
        <path d="M15 15 2 7.500 4 5.500z" fill="#161616" />
        <text x="10.500" y="10.500" fontSize="9" fontWeight="700" fill="#9328ab">文</text>
        <text x="12" y="26" fontSize="8" fontWeight="700" fill="#fff">A</text>
      </g>
    ),
  },
  {
    name: "EndNote",
    open: true,
    icon: (
      <g stroke="none">
        <rect x="1" y="1" width="27" height="27" rx="3" fill="#fff" />
        <path d="M28 17v8c0 2-1 3-3 3h-5c5-1 7-5 8-11z" fill="#4a19b5" />
        <text x="5.500" y="19" fontSize="13" fontWeight="700" fill="#5b2be0">EN</text>
      </g>
    ),
  },
  {
    name: "微信",
    open: true,
    icon: (
      <g stroke="none">
        <ellipse cx="10.500" cy="12" rx="10.500" ry="9" fill="#83d63a" />
        <path d="M3 18l-1 5 6-3z" fill="#83d63a" />
        <ellipse cx="21" cy="19" rx="9" ry="7.500" fill="#eeeeee" />
        <path d="M24 25l4 3v-5z" fill="#eee" />
        <circle cx="7" cy="9.500" r="1.300" fill="#2c5b1c" />
        <circle cx="14.500" cy="9.500" r="1.300" fill="#2c5b1c" />
        <circle cx="18" cy="17" r="1.100" fill="#777" />
        <circle cx="24" cy="17" r="1.100" fill="#777" />
      </g>
    ),
  },
  {
    name: "Photoshop",
    open: true,
    active: true,
    icon: (
      <g>
        <rect x="2" y="2" width="26" height="25" rx="3" fill="#001d26" stroke="#26c0f5" strokeWidth="2" />
        <text x="7" y="19" fontSize="14" fontWeight="600" fill="#d3eefb" stroke="none">Ps</text>
      </g>
    ),
  },
  {
    name: "个人资料",
    open: true,
    icon: (
      <g>
        <circle cx="15" cy="15" r="15" fill="#fff" stroke="none" />
        <path d="M8 8c3-7 14-6 17 1s-2 11-7 9M5 13l4-1 1 8M11 12l5 1 1 14M5 13c0 6 0 10 2 14" stroke="#777" strokeWidth=".8" />
        <path d="M20 3c5 3 7 7 4 14" stroke="#7dd3e8" strokeWidth="1" />
        <path d="M7 16h6M9 19l5 1M8 22h4" stroke="#666" strokeWidth="1" />
      </g>
    ),
  },
  {
    name: "图片",
    open: true,
    icon: (
      <g stroke="none">
        <defs>
          <linearGradient id="photoHex" x1="0" y1="0" x2=".6" y2="1">
            <stop stopColor="#4ac8f0" />
            <stop offset="1" stopColor="#a05cf5" />
          </linearGradient>
        </defs>
        <path d="M15 0l13.500 7.500v15L15 30 1.500 22.500v-15z" fill="url(#photoHex)" />
        <path d="M5 20c3-3 3-5 5-5 3 0 3 2 5 0s3-5 5-4c4 2 3 7 5 8-1 3-19 3-20 1z" fill="#d8d6fc" />
        <circle cx="11" cy="9.500" r="2.500" fill="#fff" />
      </g>
    ),
  },
];

const Taskbar = () => (
  <footer className="flex h-[50px] shrink-0 items-center bg-[linear-gradient(to_right,#3f3b32_0%,#3a3e34_25%,#38443e_36%,#2f3c46_50%,#34443f_60%,#33463e_83%,#424035_90%,#2d3e46_96%,#33453f_100%)] text-white">
    <button aria-label="开始" className="flex w-[60px] justify-center">
      <Icon size={20} box="0 0 20 20">
        <path d="M0 2.800 8.200 1.700v7.700H0zM9.200 1.500 20 0v9.400H9.200zM0 10.500h8.200v7.800L0 17.200zM9.200 10.500H20V20L9.200 18.500z" fill="currentColor" stroke="none" />
      </Icon>
    </button>
    <label className="flex h-[50px] w-[430px] items-center border border-[#c4c4c4] bg-[#f2f2f2] text-[#2b2b2b]">
      <Icon size={22} className="ml-3.5">
        <circle cx="14" cy="9" r="7" />
        <path d="M9 14 1.500 22.500" strokeWidth="1.800" />
      </Icon>
      <input
        aria-label="搜索"
        placeholder="在这里输入你要搜索的内容"
        className="ml-[13px] flex-1 text-[19px] outline-none placeholder:text-[#2f2f2f]"
      />
    </label>
    <button aria-label="Cortana" className="flex w-[60px] justify-center">
      <Icon size={22}>
        <circle cx="12" cy="12" r="9.200" strokeWidth="2.600" />
      </Icon>
    </button>
    <button aria-label="任务视图" className="flex w-[60px] justify-center">
      <Icon size={22}>
        <path d="M2 2v3.500h13V2M2 8.500h13v8H2zM2 22.500V19h13v3.500M20.500 2v5M20.500 13v9.500" strokeWidth="1.300" />
        <path d="M19 8.500h3v3h-3z" fill="currentColor" stroke="none" />
      </Icon>
    </button>
    <div className="ml-[3px] flex h-full">
      {apps.map((app) => (
        <button
          key={app.name}
          aria-label={app.name}
          className={clsx("flex w-[62px] flex-col items-center justify-between pt-2.5", app.active && "bg-[#5d6a6b]")}
        >
          <Icon size={30} box="0 0 30 30">
            {app.icon}
          </Icon>
          {app.open && (
            <span className={clsx("flex h-[3px] justify-end bg-[#76b9ed]", app.active ? "w-full" : "w-[51px]")}>
              {app.stacked && <span className="h-full w-2.5 bg-[#5284b4]" />}
            </span>
          )}
        </button>
      ))}
    </div>
    <div className="ml-auto flex h-full items-center">
      <button aria-label="显示隐藏的图标">
        <Icon size={16} box="0 0 16 16">
          <path d="M0 12l8-8 8 8" />
        </Icon>
      </button>
      <Icon size={20} className="ml-3">
        <path d="M7 4h16v13H4V9M13 17v4M9 21.500h9M0 2h5v5H0zM2.500 7v3" />
      </Icon>
      <Icon size={20} className="ml-2.5">
        <path d="M4.500 8h16v10h-16zM22 11v4M1 2v3M5 2v3M0 6h6v3H0zM3 9v5" />
        <path d="M6.500 10h13v6.500h-13z" fill="currentColor" stroke="none" />
      </Icon>
      <Icon size={20} className="ml-2">
        <path d="M1 9h4l5-5v16l-5-5H1zM13 9c1.500 2 1.500 4 0 6" />
        <path d="M16 6.500c3.500 3.500 3.500 7.500 0 11M19.500 4c4.500 5 4.500 11 0 16" stroke="#88907f" />
      </Icon>
      <span className="ml-[9px] text-[20px] leading-6">英</span>
      <div className="ml-3.5 w-[76px] text-center text-base leading-[23px]">
        <div>11:12</div>
        <div>2020/5/29</div>
      </div>
      <button aria-label="通知" className="ml-6">
        <Icon size={20} box="0 0 20 20">
          <path d="M0 0h20v17h-7.500L10 20l-2.500-3H0z" fill="currentColor" stroke="none" />
          <path d="M4 5h12M4 8.500h12M4 12h8" stroke="#2d3e46" />
        </Icon>
      </button>
      <div className="ml-6 mr-[5px] h-full w-px bg-[#7d8a8d]" />
    </div>
  </footer>
);

const App = () => (
  <div className="relative flex h-screen min-h-[1000px] flex-col overflow-hidden bg-[#535353] font-['Noto_Sans','Noto_Sans_CJK_SC',sans-serif]">
    <MenuBar />
    <OptionsBar />
    <div className="flex min-h-0 flex-1">
      <Toolbar />
      <Document />
      <Dock />
      <Panels />
    </div>
    <Taskbar />
    <Watermark />
  </div>
);

export default App;
